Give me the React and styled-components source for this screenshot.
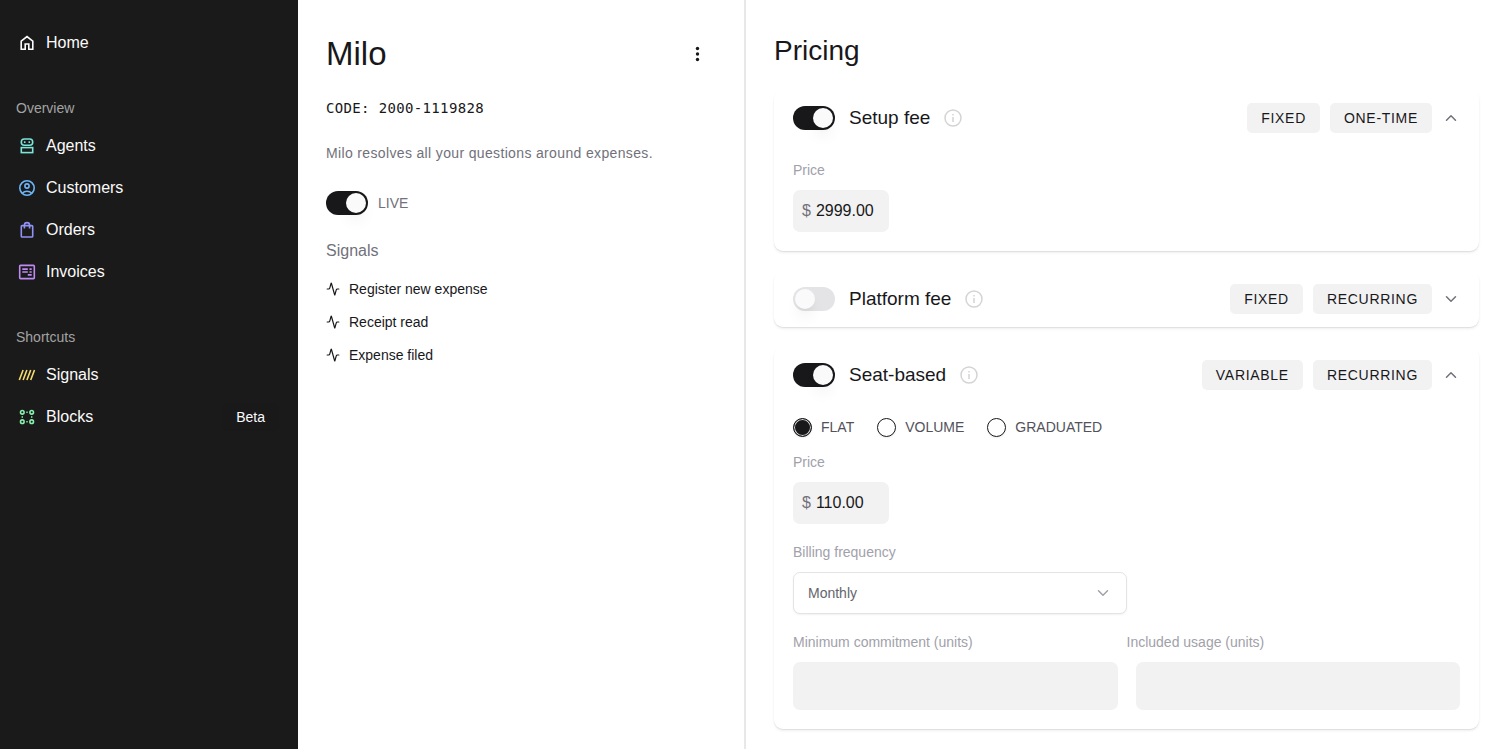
import { useState } from 'react';
import styled, { createGlobalStyle } from 'styled-components';
import { Activity, ChevronDown, ChevronUp } from 'lucide-react';

const GlobalStyle = createGlobalStyle`
  * {
    box-sizing: border-box;
  }

  body {
    margin: 0;
    background: #fff;
    color: #18181b;
    font-family: "Liberation Sans", Arial, sans-serif;
    font-size: 14px;
    line-height: 20px;
  }

  h1, h2, h3, p, ul {
    margin: 0;
    padding: 0;
    font-weight: 400;
  }

  ul {
    list-style: none;
  }

  button, input, select {
    font: inherit;
    color: inherit;
  }
`;

const Layout = styled.div`
  display: grid;
  grid-template-columns: 298px 448px 1fr;
  height: 100vh;
  overflow: hidden;
`;

const Sidebar = styled.nav`
  padding: 22px 19px 22px 16px;
  background: #1a1a1a;
  color: #fafafa;
`;

const NavTitle = styled.h3`
  margin-top: 28px;
  color: #a3a3a3;
  font-size: 14px;
  line-height: 33px;
`;

const NavLink = styled.a`
  display: flex;
  align-items: center;
  height: 42px;
  padding-left: 2px;
  gap: 10px;
  color: inherit;
  font-size: 16px;
  text-decoration: none;

  svg {
    color: ${(props) => props.$color};
  }
`;

const Beta = styled.span`
  margin-left: auto;
  padding: 4px 14px;
  border-radius: 6px;
  background: #19191a;
  font-size: 14px;
`;

const Details = styled.section`
  padding: 34px 33px 34px 28px;
  border-right: 2px solid #e8e8e8;
`;

const DetailsHeader = styled.header`
  display: flex;
  align-items: center;
  justify-content: space-between;
`;

const Name = styled.h1`
  font-size: 33px;
  line-height: 40px;
`;

const IconButton = styled.button`
  display: flex;
  align-items: center;
  justify-content: center;
  width: ${(props) => props.$size}px;
  height: ${(props) => props.$size}px;
  padding: 0;
  border: none;
  background: none;
  color: ${(props) => props.$color || '#18181b'};
`;

const Code = styled.p`
  margin-top: 22px;
  font-family: "DejaVu Sans Mono", monospace;
  letter-spacing: .025em;
  line-height: 24px;
`;

const Description = styled.p`
  margin-top: 21px;
  color: #71717a;
  letter-spacing: .025em;
  line-height: 24px;
`;

const LiveLabel = styled.label`
  display: flex;
  align-items: center;
  margin-top: 26px;
  gap: 10px;
  color: #71717a;
`;

const Switch = styled.input.attrs({ type: 'checkbox', role: 'switch' })`
  appearance: none;
  display: flex;
  align-items: center;
  flex-shrink: 0;
  width: 42px;
  height: 24px;
  margin: 0;
  padding: 2px;
  border-radius: 12px;
  background: #e4e4e7;

  &::before {
    content: "";
    width: 20px;
    height: 20px;
    border-radius: 50%;
    background: #fafafa;
    box-shadow: 0 10px 15px -3px rgba(0, 0, 0, .08), 0 4px 6px -4px rgba(0, 0, 0, .08);
  }

  &:checked {
    justify-content: flex-end;
    background: #18181b;
  }
`;

const SignalsTitle = styled.h2`
  margin: 24px 0 9px;
  color: #71717a;
  font-size: 16px;
  line-height: 24px;
`;

const Signal = styled.li`
  display: flex;
  align-items: center;
  height: 33px;
  gap: 9px;
`;

const Pricing = styled.main`
  padding: 34px 21px 20px 28px;
`;

const PricingTitle = styled.h2`
  margin-bottom: 22px;
  font-size: 28px;
  line-height: 34px;
`;

const Cards = styled.div`
  display: flex;
  flex-direction: column;
  gap: 20px;
`;

const Card = styled.section`
  padding: 0 19px;
  border-radius: 9px;
  background: #fff;
  box-shadow: 0 2px 3px rgba(0, 0, 0, .06), 0 1px 1px rgba(0, 0, 0, .08);
`;

const CardHeader = styled.header`
  display: flex;
  align-items: center;
  height: 56px;
  gap: 14px;
`;

const CardTitle = styled.label`
  font-size: 19px;
  line-height: 24px;
`;

const CardActions = styled.div`
  display: flex;
  align-items: center;
  margin-left: auto;
  gap: 10px;
`;

const Tag = styled.span`
  padding: 5px 14px;
  border-radius: 5px;
  background: #f2f2f2;
  letter-spacing: .05em;
`;

const CardBody = styled.div`
  padding: 14px 0 19px;
`;

const Label = styled.label`
  display: block;
  margin-bottom: 10px;
  color: #a1a1aa;
`;

const PriceBox = styled.div`
  display: flex;
  align-items: center;
  width: 96px;
  height: 42px;
  padding: 0 9px;
  gap: 5px;
  border-radius: 7px;
  background: #f2f2f2;
  color: #71717a;
  font-size: 16px;
`;

const PriceInput = styled.input`
  width: 100%;
  min-width: 0;
  padding: 0;
  border: none;
  outline: none;
  background: none;
  color: #18181b;
`;

const RadioGroup = styled.div`
  display: flex;
  margin-bottom: 15px;
  gap: 23px;
`;

const RadioLabel = styled.label`
  display: flex;
  align-items: center;
  gap: 9px;
  color: #52525b;
`;

const Radio = styled.input.attrs({ type: 'radio' })`
  appearance: none;
  width: 19px;
  height: 19px;
  margin: 0;
  border: 1px solid #18181b;
  border-radius: 50%;
  background: #fff;
  box-shadow: 0 1px 2px rgba(0, 0, 0, .08);

  &:checked {
    background: #18181b;
    box-shadow: inset 0 0 0 1px #d4d4d8, 0 1px 2px rgba(0, 0, 0, .08);
  }
`;

const Field = styled.div`
  margin-top: 18px;
`;

const SelectBox = styled.div`
  display: grid;
  align-items: center;
  width: 50%;

  > * {
    grid-area: 1 / 1;
  }

  svg {
    justify-self: end;
    margin-right: 15px;
    color: #a1a1aa;
    pointer-events: none;
  }
`;

const Select = styled.select`
  appearance: none;
  width: 100%;
  height: 42px;
  padding: 0 14px;
  border: 1px solid #e4e4e7;
  border-radius: 7px;
  background: #fff;
  box-shadow: 0 1px 2px rgba(0, 0, 0, .06);
  color: #64646c;
`;

const UnitLabels = styled.div`
  display: grid;
  grid-template-columns: 1fr 1fr;
`;

const UnitInputs = styled.div`
  display: grid;
  grid-template-columns: 1fr 1fr;
  gap: 18px;
`;

const UnitInput = styled.input`
  min-width: 0;
  height: 48px;
  padding: 0 14px;
  border: none;
  border-radius: 7px;
  background: #f2f2f2;
`;

function Icon({ children }) {
  return (
    <svg width="18" height="18" viewBox="0 0 18 18" fill="none" stroke="currentColor" strokeWidth="1.6" aria-hidden="true">
      {children}
    </svg>
  );
}

const icons = {
  home: <path d="M3.2 7.1 9 2.5l5.8 4.6v8.2h-4V10H7.2v5.3h-4z" />,
  agents: (
    <>
      <rect x="3.3" y="2" width="11.4" height="6.2" rx="3" />
      <rect x="3.3" y="10.6" width="11.4" height="5" />
      <path d="M5.9 5.1h1.6M10.5 5.1h1.6" />
    </>
  ),
  customers: (
    <>
      <circle cx="9" cy="9" r="7.2" />
      <circle cx="9" cy="7" r="2.1" />
      <path d="M4.2 14.2c1.4-1.4 3-2 4.8-2s3.4.6 4.8 2" />
    </>
  ),
  orders: (
    <>
      <rect x="3.3" y="4.6" width="11.4" height="11.4" rx=".8" />
      <path d="M6.4 7.6V4.2a2.6 2.6 0 0 1 5.2 0v3.4" />
    </>
  ),
  invoices: (
    <>
      <rect x="1.7" y="2.4" width="14.6" height="13.2" rx=".8" />
      <path d="M4.3 6.1h5.5M4.3 9h5.5M11.5 6.1h2.2M11.5 9h2.2M9.8 11.9h3.9" />
    </>
  ),
  signals: <path d="M1.3 14 5.1 4M5.1 14 8.9 4M8.9 14l3.8-10M12.7 14l3.8-10" />,
  blocks: (
    <>
      <circle cx="4.3" cy="4.3" r="1.8" />
      <circle cx="13.7" cy="4.3" r="1.8" />
      <circle cx="4.3" cy="13.7" r="1.8" />
      <circle cx="13.7" cy="13.7" r="1.8" />
      <path d="M8.3 4.3h1.4M8.3 13.7h1.4M3.6 9H5M13 9h1.4" />
    </>
  ),
};

const overview = [
  { name: 'Agents', icon: 'agents', color: '#7ae5d8' },
  { name: 'Customers', icon: 'customers', color: '#6cb6f8' },
  { name: 'Orders', icon: 'orders', color: '#9093f6' },
  { name: 'Invoices', icon: 'invoices', color: '#c08af3' },
];

const shortcuts = [
  { name: 'Signals', icon: 'signals', color: '#f3dc6b' },
  { name: 'Blocks', icon: 'blocks', color: '#86efac', beta: true },
];

const signals = ['Register new expense', 'Receipt read', 'Expense filed'];

function NavItem({ item }) {
  return (
    <NavLink href="#" $color={item.color}>
      <Icon>{icons[item.icon]}</Icon>
      {item.name}
      {item.beta ? <Beta>Beta</Beta> : null}
    </NavLink>
  );
}

function InfoIcon() {
  return (
    <svg width="18" height="18" viewBox="0 0 18 18" fill="none" stroke="#d4d4d8" strokeWidth="1.5" aria-hidden="true">
      <circle cx="9" cy="9" r="8" />
      <path d="M9 8v5M9 5v1.5" />
    </svg>
  );
}

function PriceField({ id, value }) {
  return (
    <>
      <Label htmlFor={id}>Price</Label>
      <PriceBox>
        <span>$</span>
        <PriceInput id={id} type="text" defaultValue={value} />
      </PriceBox>
    </>
  );
}

function FeeCard({
  id, title, tags, enabled = false, children,
}) {
  const [open, setOpen] = useState(enabled);

  return (
    <Card>
      <CardHeader>
        <Switch id={id} defaultChecked={enabled} />
        <CardTitle htmlFor={id}>{title}</CardTitle>
        <InfoIcon />
        <CardActions>
          {tags.map((tag) => <Tag key={tag}>{tag}</Tag>)}
          <IconButton
            type="button"
            aria-label={`Toggle ${title}`}
            $size={18}
            $color="#71717a"
            onClick={() => setOpen(!open)}
          >
            {open ? <ChevronUp size={20} strokeWidth={2} /> : <ChevronDown size={20} strokeWidth={2} />}
          </IconButton>
        </CardActions>
      </CardHeader>
      {open && children ? <CardBody>{children}</CardBody> : null}
    </Card>
  );
}

export default function App() {
  return (
    <>
      <GlobalStyle />
      <Layout>
        <Sidebar>
          <NavItem item={{ name: 'Home', icon: 'home', color: '#fafafa' }} />
          <NavTitle>Overview</NavTitle>
          {overview.map((item) => <NavItem key={item.name} item={item} />)}
          <NavTitle>Shortcuts</NavTitle>
          {shortcuts.map((item) => <NavItem key={item.name} item={item} />)}
        </Sidebar>

        <Details>
          <DetailsHeader>
            <Name>Milo</Name>
            <IconButton type="button" aria-label="More" $size={28}>
              <svg width="18" height="18" viewBox="0 0 18 18" fill="currentColor" aria-hidden="true">
                <circle cx="9.5" cy="3.5" r="1.7" />
                <circle cx="9.5" cy="9" r="1.7" />
                <circle cx="9.5" cy="14.5" r="1.7" />
              </svg>
            </IconButton>
          </DetailsHeader>
          <Code>CODE: 2000-1119828</Code>
          <Description>Milo resolves all your questions around expenses.</Description>
          <LiveLabel>
            <Switch defaultChecked />
            LIVE
          </LiveLabel>
          <SignalsTitle>Signals</SignalsTitle>
          <ul>
            {signals.map((signal) => (
              <Signal key={signal}>
                <Activity size={14} strokeWidth={2} />
                {signal}
              </Signal>
            ))}
          </ul>
        </Details>

        <Pricing>
          <PricingTitle>Pricing</PricingTitle>
          <Cards>
            <FeeCard id="setup-fee" title="Setup fee" tags={['FIXED', 'ONE-TIME']} enabled>
              <PriceField id="setup-price" value="2999.00" />
            </FeeCard>
            <FeeCard id="platform-fee" title="Platform fee" tags={['FIXED', 'RECURRING']} />
            <FeeCard id="seat-based" title="Seat-based" tags={['VARIABLE', 'RECURRING']} enabled>
              <RadioGroup>
                {['FLAT', 'VOLUME', 'GRADUATED'].map((model) => (
                  <RadioLabel key={model}>
                    <Radio name="model" value={model} defaultChecked={model === 'FLAT'} />
                    {model}
                  </RadioLabel>
                ))}
              </RadioGroup>
              <PriceField id="seat-price" value="110.00" />
              <Field>
                <Label htmlFor="frequency">Billing frequency</Label>
                <SelectBox>
                  <Select id="frequency">
                    <option>Monthly</option>
                  </Select>
                  <ChevronDown size={18} strokeWidth={2} />
                </SelectBox>
              </Field>
              <Field>
                <UnitLabels>
                  <Label htmlFor="commitment">Minimum commitment (units)</Label>
                  <Label htmlFor="usage">Included usage (units)</Label>
                </UnitLabels>
                <UnitInputs>
                  <UnitInput id="commitment" type="text" />
                  <UnitInput id="usage" type="text" />
                </UnitInputs>
              </Field>
            </FeeCard>
          </Cards>
        </Pricing>
      </Layout>
    </>
  );
}
